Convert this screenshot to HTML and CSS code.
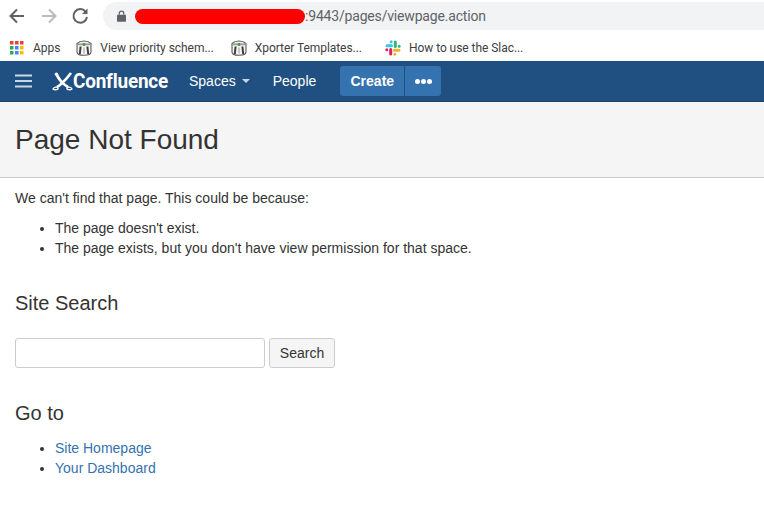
FILE: index.html
```html
<!DOCTYPE html>
<html lang="en">
<head>
<meta charset="utf-8">
<title>Page Not Found</title>
<link rel="stylesheet" href="styles.css">
</head>
<body>
<div class="chrome-top">
  <svg class="ic" width="20" height="20" viewBox="0 0 20 20"><path d="M17 10H4M10 3.500 3.500 10l6.500 6.500" fill="none" stroke="#5f6368" stroke-width="2"/></svg>
  <svg class="ic" width="20" height="20" viewBox="0 0 20 20"><path d="M17 10H4M10 3.500 3.500 10l6.500 6.500" transform="rotate(180 10 10)" fill="none" stroke="#b9bbbe" stroke-width="2"/></svg>
  <svg class="ic" width="20" height="20" viewBox="0 0 20 20"><path d="M14.500 5.500A6.800 6.800 0 1 0 16 11" fill="none" stroke="#5f6368" stroke-width="2"/><path d="M16.500 2.500V8H11z" fill="#5f6368"/></svg>
  <div class="omnibox">
    <svg class="lock" width="9" height="12" viewBox="0 0 10 13"><path d="M1 5h8a1 1 0 0 1 1 1v6a1 1 0 0 1-1 1H1a1 1 0 0 1-1-1V6a1 1 0 0 1 1-1z" fill="#5f6368"/><path d="M2.500 5V3.500a2.500 2.500 0 0 1 5 0V5" fill="none" stroke="#5f6368" stroke-width="1.400"/></svg>
    <span class="redact"></span>
    <span class="url">:9443/pages/viewpage.action</span>
  </div>
</div>
<div class="bookmarks">
  <a class="bm bm-apps">
    <svg width="14" height="14" viewBox="0 0 14 14"><rect width="3.500" height="3.500" fill="#ea4335"/><rect x="5" width="3.500" height="3.500" fill="#ea4335"/><rect x="10" width="3.500" height="3.500" fill="#ea4335"/><rect y="5" width="3.500" height="3.500" fill="#34a853"/><rect x="5" y="5" width="3.500" height="3.500" fill="#4285f4"/><rect x="10" y="5" width="3.500" height="3.500" fill="#fbbc04"/><rect y="10" width="3.500" height="3.500" fill="#34a853"/><rect x="5" y="10" width="3.500" height="3.500" fill="#4285f4"/><rect x="10" y="10" width="3.500" height="3.500" fill="#fbbc04"/></svg>
    <span>Apps</span>
  </a>
  <a class="bm bm-view">
    <svg width="16" height="16" viewBox="0 0 16 16"><use href="#tower"/></svg>
    <span>View priority schem...</span>
  </a>
  <a class="bm bm-xporter">
    <svg width="16" height="16" viewBox="0 0 16 16"><use href="#tower"/></svg>
    <span>Xporter Templates...</span>
  </a>
  <a class="bm bm-slack">
    <svg width="16" height="16" viewBox="0 0 16 16" fill="none" stroke-width="3" stroke-linecap="round"><path d="M2 5.700h4.500M6.200 1.800v0" stroke="#36c5f0"/><path d="M10.300 2v4.500M14.200 6.200v0" stroke="#2eb67d"/><path d="M14 10.300H9.500M9.800 14.200v0" stroke="#ecb22e"/><path d="M5.700 14V9.500M1.800 9.800v0" stroke="#e01e5a"/></svg>
    <span>How to use the Slac...</span>
  </a>
  <svg class="defs" width="0" height="0"><defs><g id="tower"><path d="M1 3.500C3 1.500 5 1 8 1s5 .5 7 2.500V12c0 2-2 3.300-7 3.300S1 14 1 12z" fill="#f4f4f4" stroke="#5a5a5a" stroke-width="1.100"/><path d="M2 4.300h12" stroke="#9a9a9a" stroke-width="1.800"/><path d="M6.800 3h2.400v3H6.800z" fill="#5f8f5a"/><path d="M4.600 6.500 3.800 14M11.400 6.500 12.200 14" stroke="#3f3f3f" stroke-width="2"/><path d="M7.200 7.500h1.600v6H7.200z" fill="#bdbdbd"/></g></defs></svg>
</div>
<header class="nav">
  <svg class="burger" width="18" height="14" viewBox="0 0 18 14"><path d="M0 1.500h17M0 7h17M0 12.500h17" stroke="#c9d6e3" stroke-width="2"/></svg>
  <a class="logo">
    <svg class="logo-mark" width="21" height="20" viewBox="0 0 21 20"><circle cx="4.500" cy="3.200" r="1.800" fill="#fff"/><path d="M5 4.500c2 3.500 4.500 7 8 9.500l3 2M19 2c-2.500 3.500-6 7.500-11 12l-3 2" fill="none" stroke="#fff" stroke-width="2.600"/><path d="M1 18c1-2 4-2.500 5-1s-3 2.500-5 1zM20 18c-1-2-4-2.500-5-1s3 2.500 5 1z" fill="none" stroke="#fff" stroke-width="1.300"/></svg>
    <span class="logo-text">Confluence</span>
  </a>
  <a class="nav-link nav-spaces">Spaces<i class="caret"></i></a>
  <a class="nav-link nav-people">People</a>
  <div class="actions">
    <a class="act act-create">Create</a>
    <a class="act act-more"><i></i><i></i><i></i></a>
  </div>
</header>
<div class="title-band"><h1>Page Not Found</h1></div>
<main class="content">
  <p class="intro">We can't find that page. This could be because:</p>
  <ul class="reasons">
    <li>The page doesn't exist.</li>
    <li>The page exists, but you don't have view permission for that space.</li>
  </ul>
  <h2 class="h-search">Site Search</h2>
  <form class="search">
    <input type="text" class="search-input" aria-label="Search">
    <button type="button" class="search-btn">Search</button>
  </form>
  <h2 class="h-goto">Go to</h2>
  <ul class="links">
    <li><a>Site Homepage</a></li>
    <li><a>Your Dashboard</a></li>
  </ul>
</main>
</body>
</html>
```
FILE: styles.css
```css
* { box-sizing: border-box; }
html, body { margin: 0; padding: 0; background: #fff; }
body { font-family: "Liberation Sans", Arial, sans-serif; font-size: 14px; line-height: 20px; color: #333; overflow: hidden; }
.chrome-top { height: 34px; display: flex; align-items: center; padding: 2px 0 4px 7px; gap: 12px; }
.ic { flex: none; }
.omnibox { flex: 1; height: 28px; background: #f1f3f4; border-radius: 14px 0 0 14px; display: flex; align-items: center; padding-left: 14px; }
.lock { flex: none; }
.redact { width: 170px; height: 15px; margin-left: 9px; background: #f00; border-radius: 8px; }
.url { font-size: 14px; color: #5f6368; font-family: "Roboto", sans-serif; letter-spacing: -0.18px; }
.bookmarks { height: 27px; display: flex; align-items: center; padding-left: 10px; font-family: "Roboto", sans-serif; font-size: 12px; letter-spacing: -0.05px; color: #3c4043; }
.bm { display: flex; align-items: center; gap: 8px; }
.bm-apps { gap: 9px; margin-right: 16px; }
.bm-view { margin-right: 17px; }
.bm-xporter { margin-right: 23px; }
.bm-slack { gap: 8px; }
.defs { position: absolute; }
.nav { height: 41px; background: #205081; border-bottom: 1px solid #1c4670; display: flex; align-items: center; color: #fff; padding-left: 15px; }
.burger { flex: none; }
.logo { display: flex; align-items: center; width: 118px; margin-left: 19px; font-family: "Roboto", sans-serif; font-weight: 700; font-size: 21px; letter-spacing: -0.2px; }
.logo-mark { flex: none; }
.logo-text { display: inline-block; transform: scaleX(0.9); transform-origin: left center; }
.nav-link { font-size: 14px; color: #fff; }
.nav-spaces { margin-left: 19px; display: flex; align-items: center; }
.caret { width: 0; height: 0; margin-left: 6px; border: 4px solid transparent; border-top-color: #c9d6e3; border-bottom: 0; }
.nav-people { margin-left: 23px; }
.actions { display: flex; margin-left: 24px; height: 30px; }
.act { background: #3572b0; display: flex; align-items: center; justify-content: center; }
.act-create { width: 65px; font-weight: 700; border-radius: 3px 0 0 3px; border-right: 1px solid #205081; }
.act-more { width: 36px; gap: 1px; border-radius: 0 3px 3px 0; }
.act-more i { width: 5px; height: 5px; border-radius: 50%; background: #fff; }
.title-band { height: 76px; background: #f5f5f5; border-bottom: 1px solid #ccc; padding: 0 15px; display: flex; align-items: center; }
h1 { margin: 0; font-size: 28px; font-weight: 400; color: #333; line-height: 34px; }
.content { padding: 0 15px; }
.intro { margin: 10px 0 0; }
.reasons { margin: 10px 0 0; padding-left: 40px; }
h2 { margin: 0; font-size: 20px; font-weight: 400; line-height: 24px; color: #333; }
.h-search { margin-top: 33px; }
.search { display: flex; gap: 4px; margin-top: 23px; }
.search-input { width: 250px; height: 30px; border: 1px solid #ccc; border-radius: 3px; background: #fff; padding: 0 6px; }
.search-btn { width: 66px; height: 30px; border: 1px solid #ccc; border-radius: 3px; background: #f5f5f5; color: #333; font: 14px/20px "Liberation Sans", Arial, sans-serif; padding: 0; }
.h-goto { margin-top: 33px; }
.links { margin: 13px 0 0; padding-left: 40px; }
.links a { color: #3572b0; }
```
